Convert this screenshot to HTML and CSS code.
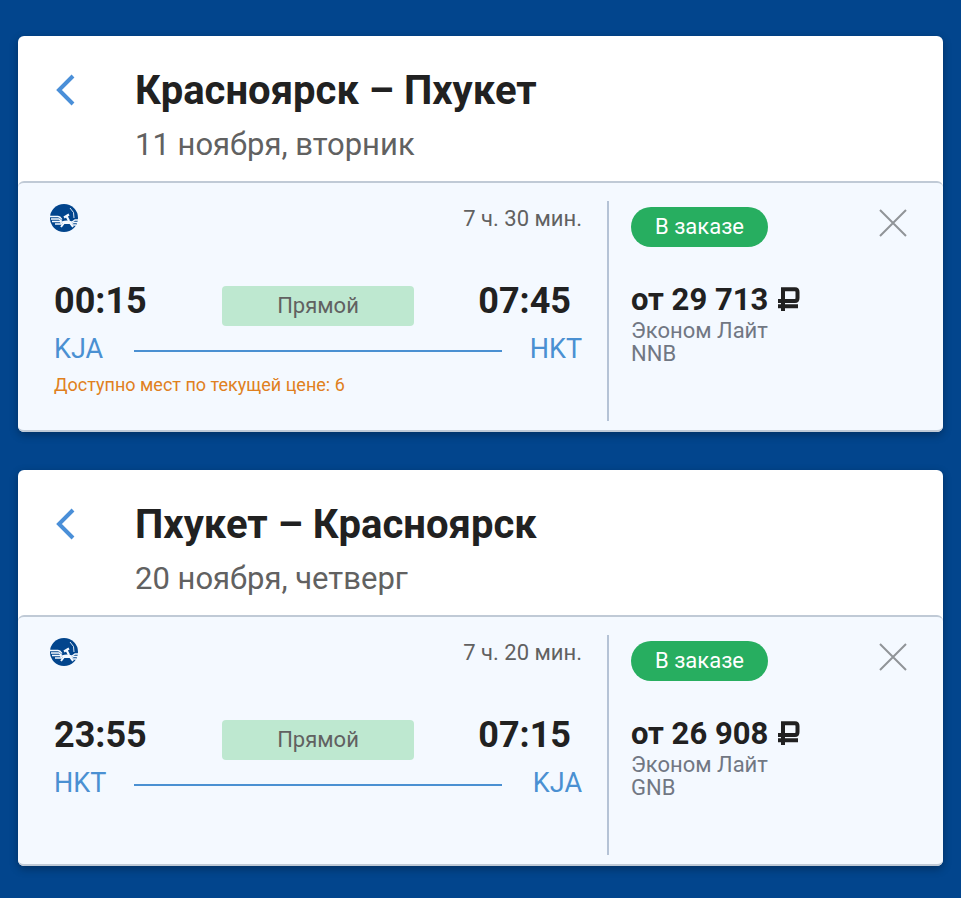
FILE: index.html
```html
<!DOCTYPE html>
<html lang="ru">
<head>
  <meta charset="UTF-8">
  <meta name="viewport" content="width=device-width, initial-scale=1">
  <title>Красноярск – Пхукет</title>
  <link rel="stylesheet" href="styles.css">
</head>
<body>
  <svg class="sprite" aria-hidden="true">
    <symbol id="icon-back" viewBox="0 0 24 32">
      <path d="M19 2 5 16l14 14" fill="none" stroke="currentColor" stroke-width="4"/>
    </symbol>
    <symbol id="icon-close" viewBox="0 0 28 28">
      <path d="M1 1l26 26M27 1 1 27" fill="none" stroke="currentColor" stroke-width="2"/>
    </symbol>
    <symbol id="icon-ruble" viewBox="0 0 22 24">
      <path d="M5 24V2.200H17Q19.500 2.200 19.500 5V11Q19.500 14 17 14H0M0 19.200H20" fill="none" stroke="currentColor" stroke-width="4"/>
    </symbol>
    <symbol id="icon-airline" viewBox="0 0 28 28">
      <circle cx="14" cy="14" r="14" fill="#02458d"/>
      <g fill="none" stroke="#f4f9ff">
        <path d="M0 12.500h8q2 0 4 3M1 15h8l3 2.500M2 17.500h8l2 2M5 20h7" stroke-width="1.300"/>
        <path d="M28 16h-3l-3 2M28 18.500h-4l-3 1.500M26 21h-5" stroke-width="1.300"/>
        <path d="M14 13.500l5-3M16.500 12l2.500 5" stroke-width="2.200"/>
        <path d="M12 18.500q5-2 10 0M11 23l3-4h6l3 4" stroke-width="1.900"/>
        <path d="M20 4q5 4 4 10" stroke-width="0.900"/>
      </g>
    </symbol>
  </svg>

  <main class="flights">
    <section class="card">
      <header class="card-header">
        <button class="back" type="button" aria-label="Назад"><svg><use href="#icon-back"/></svg></button>
        <div>
          <h2 class="title">Красноярск – Пхукет</h2>
          <p class="date">11 ноября, вторник</p>
        </div>
      </header>
      <div class="details">
        <div class="route">
          <div class="route-top">
            <svg class="airline"><use href="#icon-airline"/></svg>
            <span class="duration">7 ч. 30 мин.</span>
          </div>
          <div class="times">
            <span class="time">00:15</span>
            <span class="direct">Прямой</span>
            <span class="time arrival">07:45</span>
          </div>
          <div class="airports">
            <span>KJA</span>
            <span class="line"></span>
            <span class="airport-to">HKT</span>
          </div>
          <p class="seats">Доступно мест по текущей цене: 6</p>
        </div>
        <div class="fare">
          <div class="fare-top">
            <span class="status">В заказе</span>
            <button class="close" type="button" aria-label="Удалить"><svg><use href="#icon-close"/></svg></button>
          </div>
          <div class="price">от 29 713 <svg class="ruble" role="img" aria-label="рублей"><use href="#icon-ruble"/></svg></div>
          <p class="tariff">Эконом Лайт<br>NNB</p>
        </div>
      </div>
    </section>

    <section class="card">
      <header class="card-header">
        <button class="back" type="button" aria-label="Назад"><svg><use href="#icon-back"/></svg></button>
        <div>
          <h2 class="title">Пхукет – Красноярск</h2>
          <p class="date">20 ноября, четверг</p>
        </div>
      </header>
      <div class="details">
        <div class="route">
          <div class="route-top">
            <svg class="airline"><use href="#icon-airline"/></svg>
            <span class="duration">7 ч. 20 мин.</span>
          </div>
          <div class="times">
            <span class="time">23:55</span>
            <span class="direct">Прямой</span>
            <span class="time arrival">07:15</span>
          </div>
          <div class="airports">
            <span>HKT</span>
            <span class="line"></span>
            <span class="airport-to">KJA</span>
          </div>
        </div>
        <div class="fare">
          <div class="fare-top">
            <span class="status">В заказе</span>
            <button class="close" type="button" aria-label="Удалить"><svg><use href="#icon-close"/></svg></button>
          </div>
          <div class="price">от 26 908 <svg class="ruble" role="img" aria-label="рублей"><use href="#icon-ruble"/></svg></div>
          <p class="tariff">Эконом Лайт<br>GNB</p>
        </div>
      </div>
    </section>
  </main>
</body>
</html>
```

FILE: styles.css
```css
* {
  box-sizing: border-box;
}
body {
  margin: 0;
  background: #02458d;
  color: #212121;
  font-family: Roboto, "Liberation Sans", sans-serif;
}
h2, p {
  margin: 0;
}
button {
  padding: 0;
  border: none;
  background: none;
  cursor: pointer;
}
svg {
  display: block;
}
.sprite {
  display: none;
}
.flights {
  display: flex;
  flex-direction: column;
  gap: 38px;
  padding: 36px 18px 32px;
}
.card {
  background: #fff;
  border-radius: 6px;
  box-shadow: 0 3px 8px rgba(0, 0, 0, 0.3);
}
.card-header {
  display: flex;
  align-items: flex-start;
  gap: 57px;
  height: 145px;
  padding: 31px 36px 0;
}
.back {
  margin-top: 7px;
  color: #4a8fd8;
}
.back svg {
  width: 24px;
  height: 32px;
}
.title {
  font-size: 40px;
  line-height: 48px;
  font-weight: 700;
}
.date {
  margin-top: 12px;
  font-size: 31px;
  line-height: 36px;
  color: #616161;
}
.details {
  display: grid;
  grid-template-columns: 591fr 334fr;
  min-height: 251px;
  padding: 18px 0 9px;
  background: #f4f9ff;
  border: 1px solid #c0cad6;
  border-width: 2px 0;
  border-radius: 6px;
}
.route {
  padding: 0 25px 0 36px;
  border-right: 2px solid #b5c3d6;
}
.route-top {
  display: flex;
  justify-content: space-between;
  align-items: center;
  height: 34px;
}
.airline {
  width: 28px;
  height: 28px;
  margin-left: -4px;
}
.duration {
  font-size: 22px;
  line-height: 24px;
  padding-top: 2px;
  color: #616161;
}
.times {
  display: grid;
  grid-template-columns: 1fr 192px 1fr;
  align-items: end;
  margin-top: 46px;
}
.time {
  padding-bottom: 5px;
  font-size: 36px;
  line-height: 40px;
  font-weight: 700;
}
.arrival {
  padding-right: 11px;
  text-align: right;
}
.direct {
  border-radius: 4px;
  background: #bee8d0;
  color: #616161;
  font-size: 22px;
  line-height: 40px;
  text-align: center;
}
.airports {
  display: grid;
  grid-template-columns: 80px 1fr 80px;
  align-items: center;
  margin-top: 5px;
  font-size: 27px;
  line-height: 36px;
  color: #4a90d2;
}
.line {
  height: 2px;
  margin-top: 4px;
  background: #4a90d2;
}
.airport-to {
  text-align: right;
}
.seats {
  margin-top: 7px;
  font-size: 18px;
  line-height: 22px;
  color: #e08020;
}
.fare {
  padding: 6px 36px 0 22px;
}
.fare-top {
  display: flex;
  justify-content: space-between;
  align-items: flex-start;
}
.status {
  padding: 0 24px;
  border-radius: 20px;
  background: #27ae60;
  color: #fff;
  font-size: 22px;
  line-height: 40px;
}
.close {
  margin-top: 2px;
  color: #909498;
}
.close svg {
  width: 28px;
  height: 28px;
}
.price {
  margin-top: 35px;
  font-size: 31px;
  line-height: 36px;
  font-weight: 700;
}
.ruble {
  display: inline-block;
  width: 22px;
  height: 24px;
  margin-left: 2px;
  vertical-align: -1px;
}
.tariff {
  margin-top: 1px;
  font-size: 22px;
  line-height: 23px;
  color: #717783;
}
```
